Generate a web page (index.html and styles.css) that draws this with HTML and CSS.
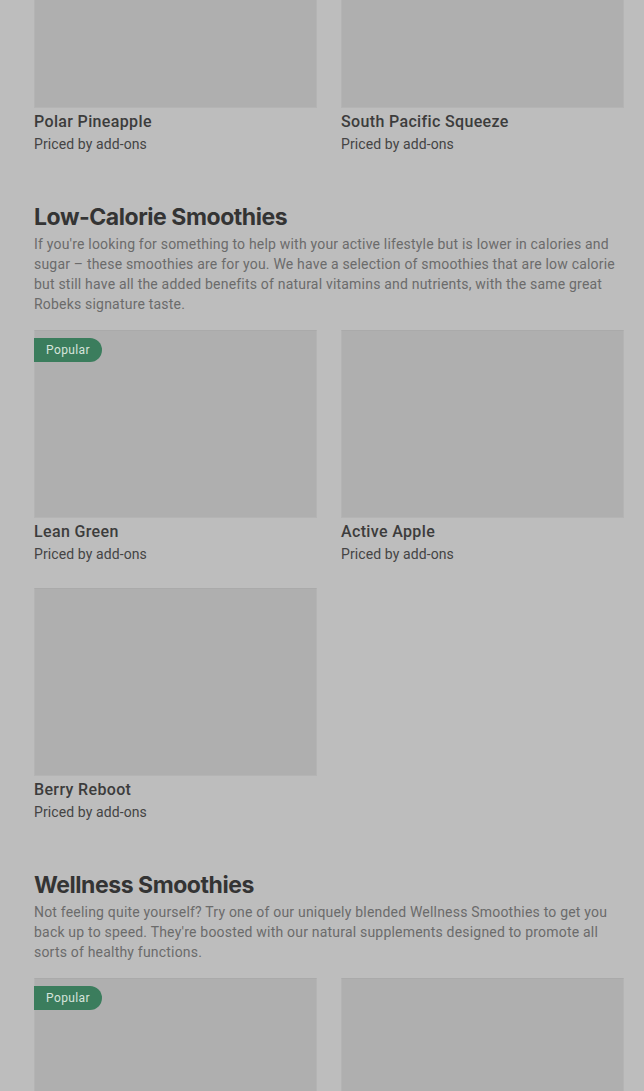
FILE: index.html
```html
<!DOCTYPE html>
<html lang="en">
<head>
<meta charset="utf-8">
<title>Smoothies</title>
<link rel="stylesheet" href="styles.css">
</head>
<body>
<main class="page">
  <section class="section section-first">
    <div class="grid">
      <article class="card">
        <div class="card-img"></div>
        <h3 class="card-title">Polar Pineapple</h3>
        <p class="card-price">Priced by add-ons</p>
      </article>
      <article class="card">
        <div class="card-img"></div>
        <h3 class="card-title">South Pacific Squeeze</h3>
        <p class="card-price">Priced by add-ons</p>
      </article>
    </div>
  </section>

  <section class="section">
    <h2 class="section-title">Low-Calorie Smoothies</h2>
    <p class="section-desc">If you're looking for something to help with your active lifestyle but is lower in calories and sugar – these smoothies are for you. We have a selection of smoothies that are low calorie but still have all the added benefits of natural vitamins and nutrients, with the same great Robeks signature taste.</p>
    <div class="grid">
      <article class="card">
        <div class="card-img"><span class="badge">Popular</span></div>
        <h3 class="card-title">Lean Green</h3>
        <p class="card-price">Priced by add-ons</p>
      </article>
      <article class="card">
        <div class="card-img"></div>
        <h3 class="card-title">Active Apple</h3>
        <p class="card-price">Priced by add-ons</p>
      </article>
      <article class="card">
        <div class="card-img"></div>
        <h3 class="card-title">Berry Reboot</h3>
        <p class="card-price">Priced by add-ons</p>
      </article>
    </div>
  </section>

  <section class="section">
    <h2 class="section-title">Wellness Smoothies</h2>
    <p class="section-desc">Not feeling quite yourself? Try one of our uniquely blended Wellness Smoothies to get you back up to speed. They're boosted with our natural supplements designed to promote all sorts of healthy functions.</p>
    <div class="grid">
      <article class="card">
        <div class="card-img"><span class="badge">Popular</span></div>
        <h3 class="card-title">Immunity Boost</h3>
        <p class="card-price">Priced by add-ons</p>
      </article>
      <article class="card">
        <div class="card-img"></div>
        <h3 class="card-title">Wellness Blend</h3>
        <p class="card-price">Priced by add-ons</p>
      </article>
    </div>
  </section>
</main>
</body>
</html>
```

FILE: styles.css
```css
* { box-sizing: border-box; }

html, body {
  margin: 0;
  padding: 0;
  background: #bdbdbd;
  overflow: hidden;
}

body {
  font-family: "Roboto", "Liberation Sans", sans-serif;
  color: #3a3a3a;
}

.page {
  padding: 0 20px 0 34px;
  margin-top: -80px;
}

.section {
  margin-top: 49px;
}

.section-first {
  margin-top: 0;
}

.section-title {
  margin: 0;
  font-family: "Inter", "Liberation Sans", sans-serif;
  font-weight: 700;
  font-size: 23px;
  line-height: 28px;
  letter-spacing: -0.45px;
  color: #343434;
}

.section-desc {
  margin: 3px 0 16px;
  font-size: 14px;
  line-height: 20px;
  font-weight: 400;
  letter-spacing: 0.2px;
  color: #6b6b6b;
}

.grid {
  display: grid;
  grid-template-columns: 283px 283px;
  column-gap: 24px;
  row-gap: 24px;
}

.card-img {
  position: relative;
  height: 188px;
  background: #afafaf;
  border: 1px solid #b4b4b4;
  border-top-color: #aaaaaa;
}

.badge {
  position: absolute;
  top: 7px;
  left: -1px;
  height: 24px;
  padding: 0 12px;
  display: flex;
  align-items: center;
  background: #3b7d5d;
  color: #d6e4dc;
  font-size: 12px;
  letter-spacing: 0.4px;
  border-radius: 0 12px 12px 0;
}

.card-title {
  margin: 2px 0 0;
  font-size: 16px;
  line-height: 24px;
  font-weight: 500;
  letter-spacing: 0.35px;
  color: #3c3c3c;
}

.card-price {
  margin: 0;
  font-size: 14px;
  line-height: 20px;
  letter-spacing: 0.1px;
  color: #444444;
}
```
